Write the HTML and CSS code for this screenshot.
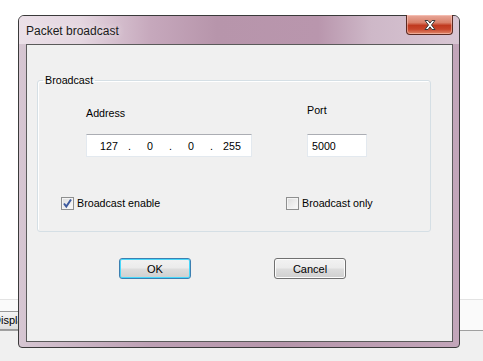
FILE: index.html
```html
<!DOCTYPE html>
<html lang="en">
<head>
  <meta charset="UTF-8">
  <meta name="viewport" content="width=device-width, initial-scale=1.0">
  <title>Packet broadcast</title>
  <link rel="stylesheet" href="styles.css">
</head>
<body>
  <!-- the app behind the dialog -->
  <div class="backdrop">
    <div class="back-top"></div>
    <div class="back-strip">
      <div class="back-btn">Display</div>
    </div>
    <div class="back-rest"></div>
  </div>

  <div class="window">
    <div class="titlebar">
      <span class="title">Packet broadcast</span>
      <button class="close" aria-label="Close">
        <svg width="16" height="12" viewBox="0 0 16 12">
          <path d="M3 1.5h3l2 2.6 2-2.6h3l-3.5 4.5 3.5 4.5h-3l-2-2.6-2 2.6h-3l3.5-4.5z" fill="#fff" stroke="#3b3b3b" stroke-width="1" stroke-linejoin="round"/>
        </svg>
      </button>
    </div>
    <div class="client">
      <fieldset class="group">
        <legend>Broadcast</legend>
        <div class="fields">
          <div class="field addr">
            <label>Address</label>
            <div class="ip-box">
              <span class="seg">127</span><span class="dot">.</span>
              <span class="seg">0</span><span class="dot">.</span>
              <span class="seg">0</span><span class="dot">.</span>
              <span class="seg">255</span>
            </div>
          </div>
          <div class="field port">
            <label class="port-label">Port</label>
            <div class="text-box">5000</div>
          </div>
        </div>
        <div class="checks">
          <label class="check enable"><span class="box checked"><svg width="11" height="11" viewBox="0 0 11 11"><path d="M2 5.5l2.3 3L9 1.5" fill="none" stroke="#3d5a9e" stroke-width="2"/></svg></span>Broadcast enable</label>
          <label class="check only"><span class="box"></span>Broadcast only</label>
        </div>
      </fieldset>
      <div class="buttons">
        <button class="btn default">OK</button>
        <button class="btn cancel">Cancel</button>
      </div>
    </div>
  </div>
</body>
</html>
```

FILE: styles.css
```css
body {
  margin: 0;
  width: 483px;
  height: 361px;
  overflow: hidden;
  position: relative;
  font-family: 'Liberation Sans', Arial, sans-serif;
  font-size: 10.7px;
  color: #000;
  background: #f0f0f0;
}
.backdrop {
  display: flex;
  flex-direction: column;
}
.back-top {
  height: 299px;
  background: #fff;
}
.back-strip {
  height: 30px;
  border-top: 1px solid #e3e3e3;
  border-bottom: 1px solid #a0a0a0;
  background: #fafafa;
  display: flex;
  align-items: flex-end;
}
.back-btn {
  width: 40px;
  height: 17px;
  margin-left: -10px;
  padding-left: 2px;
  border: 1px solid #9a9a9a;
  background: linear-gradient(#f4f4f4, #dedede);
  line-height: 17px;
  font-size: 11px;
}
.back-rest {
  flex: 1;
}

/* dialog window, placed on the desktop */
.window {
  position: absolute;
  left: 18px;
  top: 15px;
  width: 440px;
  height: 331px;
  border: 1px solid #3a3a3a;
  border-radius: 6px 6px 4px 4px;
  background: linear-gradient(90deg, #d6c6d2 0%, #bda0b4 30%, #b696ab 60%, #c3a6ba 100%);
  display: flex;
  flex-direction: column;
}
.titlebar {
  height: 28px;
  display: flex;
  align-items: flex-start;
  justify-content: space-between;
  background: linear-gradient(90deg, #ebe0e8 0%, #e4d6e0 14%, #c6a8bc 30%, #b795ab 45%, #b996ad 68%, #ceb8c8 80%, #d8c6d3 100%);
  border-radius: 5px 5px 0 0;
}
.title {
  margin: 8px 0 0 7px;
  font-family: 'Liberation Sans', Arial, sans-serif;
  font-size: 12px;
  color: #1a1a1a;
  text-shadow: 0 0 6px #f4eef2;
}
.close {
  width: 47px;
  height: 20px;
  margin: -1px 6px 0 0;
  padding: 0;
  border: 1px solid #5a2a22;
  border-top: none;
  border-radius: 0 0 4px 4px;
  background: linear-gradient(#e9a99b 0%, #d9806a 40%, #c0391f 55%, #c8452b 75%, #e08a6c 100%);
  box-shadow: inset 0 0 0 1px rgba(255, 210, 200, 0.5);
  display: flex;
  align-items: center;
  justify-content: center;
}
.client {
  margin: 0 6px 5px 7px;
  flex: 1;
  border: 1px solid #5a5a5a;
  background: #f0f0f0;
}

/* group box */
.group {
  margin: 29px 0 0 10px;
  width: 394px;
  height: 158px;
  box-sizing: border-box;
  padding: 0;
  border: 1px solid #d5dfe5;
  border-radius: 3px;
  box-shadow: inset 1px 1px 0 #fff;
}
.group legend {
  margin-left: 5px;
  padding: 0 2px;
  line-height: 13px;
}
.fields {
  display: flex;
  margin-top: 20px;
}
.field {
  display: flex;
  flex-direction: column;
}
.field label {
  height: 13px;
  line-height: 13px;
  margin-bottom: 14px;
}
.field .port-label {
  margin-top: -3px;
  margin-bottom: 17px;
}
.addr {
  margin-left: 48px;
}
.port {
  margin-left: 55px;
}
.ip-box, .text-box {
  height: 23px;
  box-sizing: border-box;
  background: #fff;
  border: 1px solid #e3e9ef;
  border-top-color: #abadb3;
  display: flex;
  align-items: center;
}
.ip-box {
  width: 166px;
  padding-left: 7px;
}
.seg {
  width: 30px;
  text-align: center;
}
.dot {
  width: 11px;
  text-align: center;
}
.text-box {
  width: 60px;
  padding-left: 4px;
}

.checks {
  display: flex;
  margin-top: 39px;
}
.check {
  display: flex;
  align-items: center;
  gap: 3px;
  line-height: 13px;
}
.enable {
  margin-left: 23px;
  width: 225px;
  flex: none;
}
.only {
  margin-top: 1px;
}
.box {
  width: 13px;
  height: 13px;
  box-sizing: border-box;
  border: 1px solid #8e8f8f;
  background: linear-gradient(135deg, #dcdcdc, #fbfbfb);
  box-shadow: inset 0 0 0 1px #f4f4f4;
  display: flex;
  align-items: center;
  justify-content: center;
}

/* dialog buttons */
.buttons {
  display: flex;
  gap: 83px;
  margin: 26px 0 0 92px;
}
.btn {
  width: 72px;
  height: 21px;
  padding: 0;
  font-family: 'Liberation Sans', Arial, sans-serif;
  font-size: 11px;
  color: #000;
  border: 1px solid #707070;
  border-radius: 3px;
  background: linear-gradient(#f2f2f2 0%, #ebebeb 48%, #dddddd 52%, #cfcfcf 100%);
  box-shadow: inset 0 0 0 1px #fcfcfc;
}
.btn.default {
  border-color: #3c7fb1;
  box-shadow: inset 0 0 0 1px #48d8fb;
}
```
